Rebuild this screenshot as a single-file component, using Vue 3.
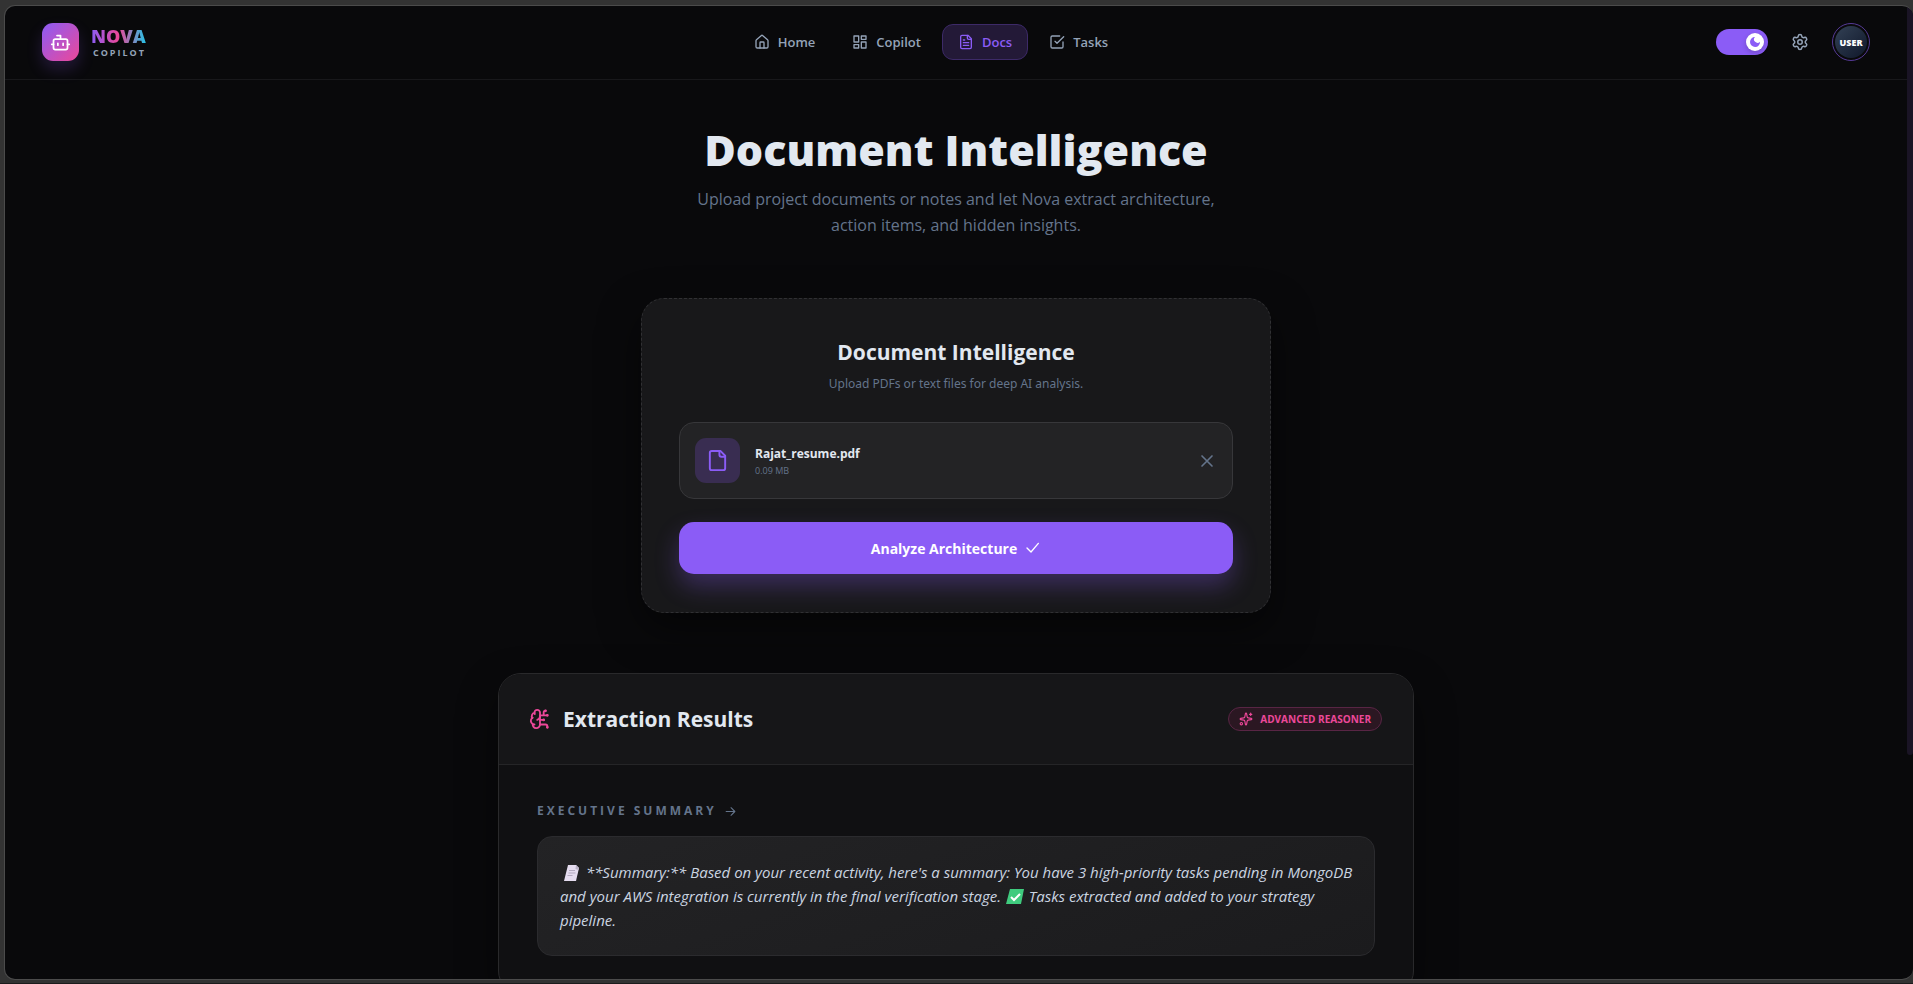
<template>
  <div class="desktop">
    <div class="window">
      <div class="page">
        <header class="navbar">
          <a href="#" class="brand">
            <span class="brand-logo">
              <svg class="icon" width="21" height="21" viewBox="0 0 24 24">
                <path d="M12 8V4H8" />
                <rect x="4" y="8" width="16" height="12" rx="2" />
                <path d="M2 14h2M20 14h2M15 13v2M9 13v2" />
              </svg>
            </span>
            <span class="brand-text">
              <span class="brand-name">NOVA</span>
              <span class="brand-sub">COPILOT</span>
            </span>
          </a>

          <nav class="nav-links">
            <a
              v-for="link in links"
              :key="link.label"
              href="#"
              class="nav-link"
              :class="{ active: link.label === current }"
              @click.prevent="current = link.label"
            >
              <svg class="icon" width="16" height="16" viewBox="0 0 24 24">
                <path v-for="d in link.paths" :key="d" :d="d" />
              </svg>
              <span>{{ link.label }}</span>
            </a>
          </nav>

          <div class="nav-actions">
            <label class="theme-switch">
              <input v-model="dark" type="checkbox" role="switch" aria-label="Dark mode" />
              <span class="knob">
                <svg width="12" height="12" viewBox="0 0 24 24">
                  <path d="M12 2a6 6 0 0 0 10 9.500A10 10 0 1 1 12 2Z" fill="#8b5cf6" />
                </svg>
              </span>
            </label>
            <button type="button" class="icon-btn" aria-label="Settings">
              <svg class="icon" width="18" height="18" viewBox="0 0 24 24">
                <path d="M9.671 4.136a2.34 2.34 0 0 1 4.659 0 2.34 2.34 0 0 0 3.319 1.915 2.34 2.34 0 0 1 2.33 4.033 2.34 2.34 0 0 0 0 3.831 2.34 2.34 0 0 1-2.33 4.033 2.34 2.34 0 0 0-3.319 1.915 2.34 2.34 0 0 1-4.659 0 2.34 2.34 0 0 0-3.32-1.915 2.34 2.34 0 0 1-2.33-4.033 2.34 2.34 0 0 0 0-3.831A2.34 2.34 0 0 1 6.35 6.051a2.34 2.34 0 0 0 3.319-1.915" />
                <circle cx="12" cy="12" r="3" />
              </svg>
            </button>
            <button type="button" class="avatar"><span>USER</span></button>
          </div>
        </header>

        <main class="content">
          <section class="hero">
            <h1>Document Intelligence</h1>
            <p>Upload project documents or notes and let Nova extract architecture, action items, and hidden insights.</p>
          </section>

          <section class="upload-card">
            <h2>Document Intelligence</h2>
            <p class="upload-hint">Upload PDFs or text files for deep AI analysis.</p>

            <div v-if="file" class="file-row">
              <span class="file-icon">
                <svg class="icon" width="23" height="23" viewBox="0 0 24 24">
                  <path d="M15 2H6a2 2 0 0 0-2 2v16a2 2 0 0 0 2 2h12a2 2 0 0 0 2-2V7Z" />
                  <path d="M14 2v4a2 2 0 0 0 2 2h4" />
                </svg>
              </span>
              <div class="file-info">
                <span class="file-name">{{ file.name }}</span>
                <span class="file-size">{{ file.size }}</span>
              </div>
              <button type="button" class="remove-btn" aria-label="Remove file" @click="file = null">
                <svg class="icon" width="20" height="20" viewBox="0 0 24 24">
                  <path d="M18 6 6 18M6 6l12 12" />
                </svg>
              </button>
            </div>

            <button type="button" class="analyze-btn">
              <span>Analyze Architecture</span>
              <svg class="icon" width="16" height="16" viewBox="0 0 24 24">
                <path d="M20 5 9 18l-6-6" />
              </svg>
            </button>
          </section>

          <section class="results">
            <div class="results-header">
              <svg class="icon brain" width="22" height="22" viewBox="0 0 24 24">
                <path d="M12 5a3 3 0 1 0-5.997.125 4 4 0 0 0-2.526 5.770 4 4 0 0 0 .556 6.588A4 4 0 1 0 12 18Z" />
                <path d="M9 13a4.500 4.500 0 0 0 3-4M6.003 5.125A3 3 0 0 0 6.401 6.500M3.477 10.896a4 4 0 0 1 .585-.396M6 18a4 4 0 0 1-1.967-.516" />
                <path d="M12 13h4M12 18h6a2 2 0 0 1 2 2v1M12 8h8M16 8V5a2 2 0 0 1 2-2" />
                <circle cx="16" cy="13" r=".5" />
                <circle cx="18" cy="3" r=".5" />
                <circle cx="20" cy="21" r=".5" />
                <circle cx="20" cy="8" r=".5" />
              </svg>
              <h2>Extraction Results</h2>
              <span class="reasoner">
                <svg class="icon" width="14" height="14" viewBox="0 0 24 24">
                  <path d="M11.017 2.814a1 1 0 0 1 1.966 0l1.051 5.558a2 2 0 0 0 1.594 1.594l5.558 1.051a1 1 0 0 1 0 1.966l-5.558 1.051a2 2 0 0 0-1.594 1.594l-1.051 5.558a1 1 0 0 1-1.966 0l-1.051-5.558a2 2 0 0 0-1.594-1.594l-5.558-1.051a1 1 0 0 1 0-1.966l5.558-1.051a2 2 0 0 0 1.594-1.594z" />
                  <path d="M20 2v4M22 4h-4" />
                  <circle cx="4" cy="20" r="2" />
                </svg>
                <span>ADVANCED REASONER</span>
              </span>
            </div>

            <div class="results-body">
              <h3>
                <span>EXECUTIVE SUMMARY</span>
                <svg class="icon" width="13" height="13" viewBox="0 0 24 24">
                  <path d="M4 12h16M13 5l7 7-7 7" />
                </svg>
              </h3>
              <p class="summary">
                <svg class="emoji" width="22" height="16" viewBox="0 0 22 16" role="img" aria-label="page">
                  <path d="M8 0h8l3 3-3 13H4Z" fill="#e5dcef" />
                  <path d="m16 0 3 3-.500 2-3-1Z" fill="#bcb3c8" />
                  <path d="M9 5.500h6M8.500 8h7M7.500 10.500h5" stroke="#b3a9bf" fill="none" />
                </svg>
                **Summary:** Based on your recent activity, here's a summary: You have 3 high-priority tasks pending in MongoDB and your AWS integration is currently in the final verification stage.
                <svg class="emoji" width="20" height="16" viewBox="0 0 20 16" role="img" aria-label="done">
                  <path d="M5 0h14l-3 15H1Z" fill="#3fcb7e" />
                  <path d="m6 8 3 3 6-6" stroke="#fff" stroke-width="2" fill="none" />
                </svg>
                Tasks extracted and added to your strategy pipeline.
              </p>
            </div>
          </section>
        </main>
      </div>
      <div class="scrollbar"><div class="thumb"></div></div>
    </div>
  </div>
</template>

<script setup>
import { ref } from 'vue'

const current = ref('Docs')
const dark = ref(true)
const file = ref({ name: 'Rajat_resume.pdf', size: '0.09 MB' })

const links = [
  {
    label: 'Home',
    paths: [
      'M15 21v-8a1 1 0 0 0-1-1h-4a1 1 0 0 0-1 1v8',
      'M3 10a2 2 0 0 1 .709-1.528l7-6a2 2 0 0 1 2.582 0l7 6A2 2 0 0 1 21 10v9a2 2 0 0 1-2 2H5a2 2 0 0 1-2-2z'
    ]
  },
  {
    label: 'Copilot',
    paths: ['M3 3h7v9H3z', 'M14 3h7v5h-7z', 'M14 12h7v9h-7z', 'M3 16h7v5H3z']
  },
  {
    label: 'Docs',
    paths: [
      'M15 2H6a2 2 0 0 0-2 2v16a2 2 0 0 0 2 2h12a2 2 0 0 0 2-2V7Z',
      'M14 2v4a2 2 0 0 0 2 2h4',
      'M10 9H8M16 13H8M16 17H8'
    ]
  },
  {
    label: 'Tasks',
    paths: [
      'm9 11 3 3L22 4',
      'M21 12v7a2 2 0 0 1-2 2H5a2 2 0 0 1-2-2V5a2 2 0 0 1 2-2h11'
    ]
  }
]
</script>

<style>
body {
  margin: 0;
  background: #333333;
}
</style>

<style scoped>
.desktop {
  box-sizing: border-box;
  height: 100vh;
  padding: 5px 0 3px 4px;
  background: #333333;
  border-bottom: 1px solid #1c1c1c;
  font-family: 'Open Sans', 'Noto Sans', sans-serif;
  color: #e2e8f0;
}

.window {
  box-sizing: border-box;
  height: 100%;
  display: flex;
  overflow: hidden;
  background: #09090b;
  border: 1px solid #4b4b4b;
  border-right: none;
  border-radius: 11px;
}

.page {
  flex: 1;
  min-width: 0;
}

.scrollbar {
  width: 6px;
}

.thumb {
  height: 77%;
  background: #1a1425;
  border-radius: 0 0 3px 3px;
}

h1, h2, h3, p {
  margin: 0;
}

button {
  font-family: inherit;
  border: none;
  background: none;
  padding: 0;
  cursor: pointer;
}

.icon {
  display: block;
  flex-shrink: 0;
  fill: none;
  stroke: currentColor;
  stroke-width: 2;
  stroke-linecap: round;
  stroke-linejoin: round;
}

.navbar {
  display: flex;
  align-items: center;
  justify-content: space-between;
  padding: 17px 37px 18px;
  border-bottom: 1px solid #18181b;
}

.brand {
  display: flex;
  align-items: center;
  gap: 12px;
  text-decoration: none;
}

.brand-logo {
  width: 37px;
  height: 38px;
  display: flex;
  align-items: center;
  justify-content: center;
  color: #ffffff;
  background: linear-gradient(135deg, #8b5cf6, #ec4899);
  border-radius: 11px;
  box-shadow: 0 8px 16px rgba(139, 92, 246, 0.2);
}

.brand-text {
  display: flex;
  flex-direction: column;
  align-items: flex-end;
  padding-top: 2px;
}

.brand-name {
  font-size: 18px;
  line-height: 20px;
  font-weight: 800;
  color: transparent;
  background: linear-gradient(90deg, #8b5cf6, #ec4899 50%, #22c3e6);
  background-clip: text;
}

.brand-sub {
  font-size: 9px;
  line-height: 14px;
  font-weight: 700;
  letter-spacing: 2px;
  color: #94a3b8;
}

.nav-links {
  display: flex;
  gap: 5px;
}

.nav-link {
  display: flex;
  align-items: center;
  gap: 8px;
  padding: 8px 15px;
  border: 1px solid transparent;
  border-radius: 11px;
  font-size: 13px;
  line-height: 18px;
  font-weight: 600;
  color: #94a3b8;
  text-decoration: none;
}

.nav-link.active {
  color: #8b5cf6;
  background: #231937;
  border-color: #3d2a68;
}

.nav-actions {
  display: flex;
  align-items: center;
  gap: 23px;
}

.theme-switch {
  box-sizing: border-box;
  position: relative;
  width: 52px;
  height: 26px;
  display: flex;
  align-items: center;
  justify-content: flex-end;
  padding: 4px;
  border-radius: 13px;
  background: #8b5cf6;
}

.theme-switch input {
  position: absolute;
  inset: 0;
  width: 100%;
  height: 100%;
  margin: 0;
  opacity: 0;
  cursor: pointer;
}

.knob {
  width: 18px;
  height: 18px;
  display: flex;
  align-items: center;
  justify-content: center;
  border-radius: 50%;
  background: #ffffff;
  box-shadow: 0 2px 5px rgba(0, 0, 0, 0.2);
}

.icon-btn {
  color: #94a3b8;
}

.avatar {
  width: 38px;
  height: 38px;
  padding: 2px;
  border: 1px solid #553a96;
  border-radius: 50%;
}

.avatar span {
  height: 100%;
  display: flex;
  align-items: center;
  justify-content: center;
  border-radius: 50%;
  background: linear-gradient(135deg, #334155, #0f172a);
  font-size: 9px;
  font-weight: 800;
  color: #ffffff;
}

.content {
  display: flex;
  flex-direction: column;
  align-items: center;
}

.hero {
  max-width: 560px;
  padding: 44px 0 60px;
  text-align: center;
}

.hero h1 {
  font-size: 43px;
  line-height: 52px;
  font-weight: 800;
  white-space: nowrap;
}

.hero p {
  margin-top: 10px;
  font-size: 16px;
  line-height: 26px;
  color: #64748b;
}

.upload-card {
  box-sizing: border-box;
  width: 33%;
  min-width: 630px;
  padding: 37px 37px 38px;
  background: #18181a;
  border: 1px dashed #303033;
  border-radius: 23px;
  box-shadow: 0 16px 40px rgba(0, 0, 0, 0.5);
  text-align: center;
}

.upload-card h2 {
  font-size: 21px;
  line-height: 32px;
  font-weight: 700;
}

.upload-hint {
  margin-top: 7px;
  font-family: 'Noto Sans', sans-serif;
  font-size: 12px;
  line-height: 18px;
  color: #64748b;
}

.file-row {
  display: flex;
  align-items: center;
  gap: 15px;
  margin-top: 29px;
  padding: 15px;
  background: #232325;
  border: 1px solid #37373a;
  border-radius: 15px;
}

.file-icon {
  width: 45px;
  height: 45px;
  display: flex;
  align-items: center;
  justify-content: center;
  color: #8b5cf6;
  background: #392d51;
  border-radius: 11px;
}

.file-info {
  flex: 1;
  display: flex;
  flex-direction: column;
  padding-top: 2px;
  text-align: left;
}

.file-name {
  font-size: 12px;
  line-height: 18px;
  font-weight: 700;
}

.file-size {
  font-size: 9px;
  line-height: 16px;
  color: #64748b;
}

.remove-btn {
  color: #64748b;
}

.analyze-btn {
  width: 100%;
  height: 52px;
  display: flex;
  align-items: center;
  justify-content: center;
  gap: 8px;
  margin-top: 23px;
  border-radius: 15px;
  background: #8b5cf6;
  box-shadow: 0 12px 24px rgba(139, 92, 246, 0.3);
  color: #ffffff;
  font-size: 14px;
  font-weight: 700;
}

.results {
  box-sizing: border-box;
  width: 48%;
  min-width: 916px;
  margin-top: 60px;
  background: #101012;
  border: 1px solid #29292b;
  border-radius: 23px;
  box-shadow: 0 16px 40px rgba(0, 0, 0, 0.4);
}

.results-header {
  display: flex;
  align-items: center;
  gap: 12px;
  padding: 29px 31px 29px 30px;
  background: #161618;
  border-bottom: 1px solid #252527;
  border-radius: 22px 22px 0 0;
}

.results-header h2 {
  flex: 1;
  font-size: 21px;
  line-height: 32px;
  font-weight: 700;
}

.brain {
  color: #ec4899;
}

.reasoner {
  display: flex;
  align-items: center;
  gap: 7px;
  padding: 3px 10px;
  border: 1px solid #582544;
  border-radius: 12px;
  background: #2b1722;
  color: #ec4899;
  font-size: 10px;
  line-height: 16px;
  font-weight: 700;
}

.results-body {
  padding: 37px 38px;
}

.results-body h3 {
  display: flex;
  align-items: center;
  gap: 7px;
  font-size: 12px;
  line-height: 18px;
  font-weight: 700;
  letter-spacing: 3px;
  color: #64748b;
}

.summary {
  margin-top: 16px;
  padding: 23px 16px 23px 22px;
  background: linear-gradient(160deg, #232325, #1b1b1d);
  border: 1px solid #2b2b2e;
  border-radius: 15px;
  font-size: 15px;
  line-height: 24px;
  font-style: italic;
  color: #cbd5e1;
}

.emoji {
  vertical-align: -3px;
}
</style>
